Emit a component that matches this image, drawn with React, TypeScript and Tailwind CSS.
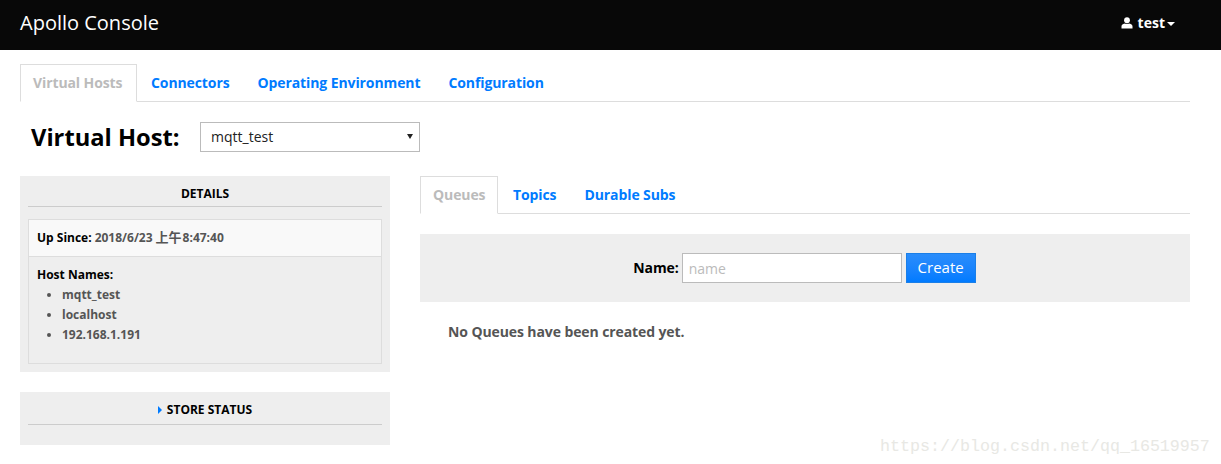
const font = 'font-["Open_Sans","Noto_Sans_CJK_SC",sans-serif]';

function Tabs({ items, activeWidth }: { items: string[]; activeWidth: string }) {
  return (
    <div className="flex h-[38px] border-b border-[#ddd]">
      {items.map((item, i) =>
        i === 0 ? (
          <div
            key={item}
            className={`${activeWidth} h-[38px] pl-3 flex items-center text-sm font-bold tracking-[-0.1px] text-[#bbb] bg-white border border-[#ddd] border-b-white`}
          >
            {item}
          </div>
        ) : (
          <div key={item} className="h-[37px] px-[14px] flex items-center text-sm font-bold tracking-[-0.1px] text-[#007bff]">
            {item}
          </div>
        ),
      )}
    </div>
  );
}

export default function App() {
  return (
    <div className={`relative w-[1221px] h-[464px] overflow-hidden bg-white ${font}`}>
      {/* Header */}
      <div className="h-[50px] bg-[#080808] pl-5 pr-[46px] pb-1 flex items-center justify-between text-white">
        <span className="text-[20px] leading-none">Apollo Console</span>
        <div className="flex items-center text-sm font-bold">
          <svg width="12" height="12" viewBox="0 0 12 12" fill="white" className="mr-[5px]">
            <circle cx="6" cy="3.2" r="2.9" />
            <path d="M0.5 11.5V9.2C0.5 7.6 2 6.8 3.4 6.4C4.2 7 7.8 7 8.6 6.4C10 6.8 11.5 7.6 11.5 9.2V11.5Z" />
          </svg>
          test
          <span className="ml-[2px] mt-[1px] w-0 h-0 border-x-4 border-x-transparent border-t-4 border-t-white" />
        </div>
      </div>

      <div className="w-[1170px] ml-5 pt-[14px]">
        <Tabs activeWidth="w-[117px]" items={["Virtual Hosts", "Connectors", "Operating Environment", "Configuration"]} />

        {/* Virtual host picker */}
        <div className="flex items-center h-[30px] mt-[20px] pl-[11px]">
          <span className="w-[169px] pt-[1px] text-[23.7px] font-bold text-black">Virtual Host:</span>
          <div className="relative w-[220px] h-[30px] border border-[#bbb] pl-[10px] flex items-center text-sm text-[#222]">
            mqtt_test
            <span className="absolute right-[6px] top-[11px] w-0 h-0 border-x-[3px] border-x-transparent border-t-[5px] border-t-[#222]" />
          </div>
        </div>

        <div className="flex gap-[30px] mt-6">
          {/* Left column */}
          <div className="w-[370px] flex flex-col gap-5">
            <div className="h-[196px] bg-[#eee]">
              <div className="mx-2 h-[31px] pt-[5px] flex items-center justify-center border-b border-[#ccc] text-xs font-bold text-black">
                DETAILS
              </div>
              <div className="mx-2 mt-3 h-[145px] border border-[#ddd] text-xs">
                <div className="h-[37px] px-2 flex items-center bg-[#f9f9f9] border-b border-[#ddd] font-bold text-[#555]">
                  <span className="text-black mr-[3px]">Up Since:</span>
                  2018/6/23 <span className="ml-[3px] mr-[1px] text-[13px] font-semibold">上午</span>8:47:40
                </div>
                <div className="px-2 pt-[9px]">
                  <div className="font-bold text-black leading-[18px]">Host Names:</div>
                  <ul className="list-disc pl-[25px] font-bold text-[#555] leading-5 mt-[1px]">
                    <li>mqtt_test</li>
                    <li>localhost</li>
                    <li>192.168.1.191</li>
                  </ul>
                </div>
              </div>
            </div>
            <div className="h-[53px] bg-[#eee]">
              <div className="mx-2 h-[33px] pt-[4px] flex items-center justify-center gap-[5px] border-b border-[#ccc] text-xs font-bold text-black">
                <span className="w-0 h-0 border-y-[4px] border-y-transparent border-l-[4px] border-l-[#007bff]" />
                STORE STATUS
              </div>
            </div>
          </div>

          {/* Right column */}
          <div className="w-[770px]">
            <Tabs activeWidth="w-[78px] mr-[1px]" items={["Queues", "Topics", "Durable Subs"]} />
            <div className="mt-5 h-[68px] bg-[#eee] pr-[1px] flex items-center justify-center text-sm">
              <span className="font-bold text-black mr-[3px] tracking-[-0.1px]">Name:</span>
              <input
                placeholder="name"
                className="w-[220px] h-[30px] px-[6px] bg-white border border-[#bbb] text-sm placeholder:text-[#bbb] outline-none"
              />
              <button className="ml-1 w-[70px] h-[30px] bg-gradient-to-b from-[#2a8dfb] to-[#007bff] border border-[#1a7fe8] text-white text-[15px]">
                Create
              </button>
            </div>
            <div className="mt-[20px] pl-7 text-sm font-bold tracking-[-0.1px] text-[#555] leading-5">
              No Queues have been created yet.
            </div>
          </div>
        </div>
      </div>

      {/* Watermark */}
      <span className='absolute left-[880px] top-[434px] font-["Liberation_Mono",monospace] text-[16.67px] text-[#e8e8e4]'>
        https://blog.csdn.net/qq_16519957
      </span>
    </div>
  );
}
